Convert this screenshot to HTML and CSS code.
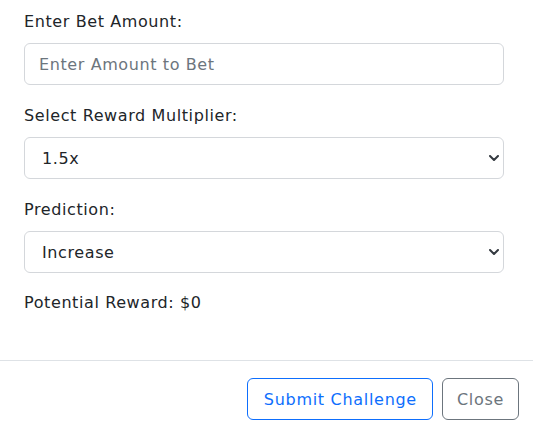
FILE: index.html
```html
<!DOCTYPE html>
<html>
<head>
<meta charset="utf-8">
<link rel="stylesheet" href="styles.css">
</head>
<body>
<div class="modal">
  <div class="modal-body">
    <div class="group">
      <label class="label">Enter Bet Amount:</label>
      <input class="control" type="text" placeholder="Enter Amount to Bet">
    </div>
    <div class="group">
      <label class="label">Select Reward Multiplier:</label>
      <div class="select-wrap">
        <select class="control select"><option>1.5x</option></select>
        <svg class="chev" width="10" height="6" viewBox="0 0 10 6"><path d="M1 1 5 5 9 1" fill="none" stroke="#343a40" stroke-width="2" stroke-linecap="round" stroke-linejoin="round"/></svg>
      </div>
    </div>
    <div class="group">
      <label class="label">Prediction:</label>
      <div class="select-wrap">
        <select class="control select sel2"><option>Increase</option></select>
        <svg class="chev" width="10" height="6" viewBox="0 0 10 6"><path d="M1 1 5 5 9 1" fill="none" stroke="#343a40" stroke-width="2" stroke-linecap="round" stroke-linejoin="round"/></svg>
      </div>
    </div>
    <p class="reward">Potential Reward: $0</p>
  </div>
  <div class="modal-footer">
    <button class="btn btn-primary">Submit Challenge</button>
    <button class="btn btn-secondary">Close</button>
  </div>
</div>
</body>
</html>
```
FILE: styles.css
```css
* { box-sizing: border-box; }
html, body { margin: 0; padding: 0; background: #fff; }
body {
  font-family: "DejaVu Sans", sans-serif;
  font-size: 16px;
  letter-spacing: 0.6px;
  color: #212529;
}
.modal { width: 533px; }
.modal-body { padding: 10px 29px 0 24px; }
.group { margin-bottom: 19px; }
.label { display: block; line-height: 24px; margin-bottom: 9px; }
.control {
  display: block;
  width: 100%;
  height: 42px;
  border: 1px solid #d4d7db;
  border-radius: 6px;
  font: inherit;
  letter-spacing: 0.6px;
  color: #212529;
  background: #fff;
  padding: 0 14px;
  outline: none;
}
.control::placeholder { color: #6c757d; }
.select-wrap { position: relative; }
.select { appearance: none; -webkit-appearance: none; padding-left: 17px; }
.chev { position: absolute; right: 5px; top: 18px; }
.reward { margin: 0; line-height: 24px; margin-top: -1px; padding-bottom: 45px; }
.modal-footer {
  border-top: 1px solid #dee2e6;
  display: flex;
  justify-content: flex-end;
  gap: 9px;
  padding: 17px 14px 14px;
}
.btn {
  height: 42px;
  font: inherit;
  letter-spacing: 0.7px;
  background: #fff;
  border-radius: 6px;
  padding: 0 14px;
}
.btn-primary { border: 1px solid #0d6efd; color: #0d6efd; padding: 0 15px 0 16px; }
.btn-secondary { border: 1px solid #6c757d; color: #6c757d; }
```
